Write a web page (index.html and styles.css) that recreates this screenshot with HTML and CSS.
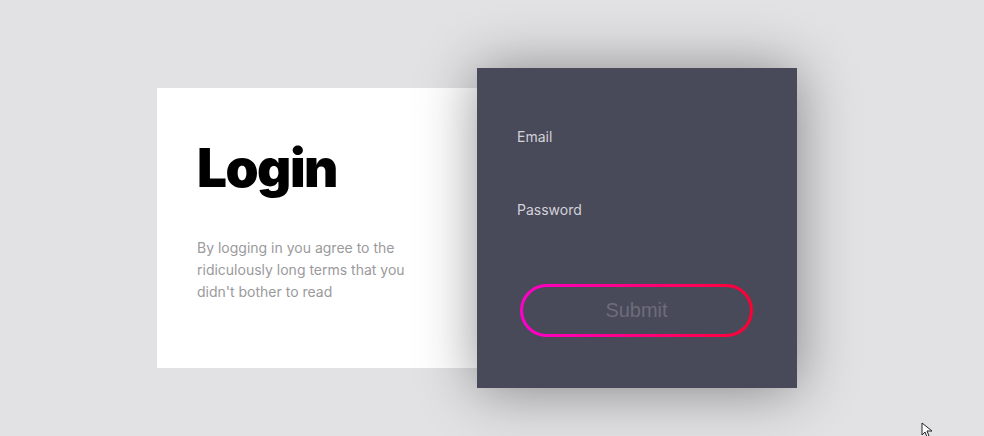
FILE: index.html
```html
<!DOCTYPE html>
<html lang="en">
<head>
<meta charset="utf-8">
<title>Login</title>
<link rel="stylesheet" href="styles.css">
</head>
<body>
<main class="stage">
  <section class="intro">
    <h1 class="title">Login</h1>
    <p class="terms">By logging in you agree to the ridiculously long terms that you didn't bother to read</p>
  </section>
  <form class="form">
    <label class="label" for="email">Email</label>
    <input class="field" id="email" type="email">
    <label class="label" for="password">Password</label>
    <input class="field" id="password" type="password">
    <button class="submit" type="button">Submit</button>
  </form>
</main>
<svg class="cursor" width="14" height="16" viewBox="0 0 14 16"><path d="M1 1 L1 13 L4 10 L6 15 L8 14 L6 9 L11 9 Z" fill="#fff" stroke="#222" stroke-width="1"/></svg>
</body>
</html>
```
FILE: styles.css
```css
html, body {
  margin: 0;
  height: 100%;
}
body {
  background: #e2e2e4;
  font-family: Inter, "Noto Sans", sans-serif;
  overflow: hidden;
  position: relative;
}
.stage {
  display: flex;
  align-items: center;
  padding: 68px 0 0 157px;
}
.intro {
  width: 320px;
  height: 280px;
  box-sizing: border-box;
  background: #fff;
  padding: 48px 40px 0;
}
.title {
  margin: 0;
  font-size: 53px;
  line-height: 64px;
  font-weight: 900;
  color: #000;
  letter-spacing: -1.5px;
}
.terms {
  margin: 37px 0 0;
  max-width: 240px;
  font-size: 14px;
  line-height: 22px;
  color: #9a9a9c;
}
.form {
  width: 320px;
  height: 320px;
  box-sizing: border-box;
  background: #484a59;
  box-shadow: 0 2px 55px rgba(0, 0, 0, 0.42);
  padding: 60px 40px 0;
  display: flex;
  flex-direction: column;
  align-items: flex-start;
  position: relative;
  z-index: 1;
}
.label {
  font-size: 14px;
  line-height: 18px;
  color: #d4d0d8;
}
.field {
  height: 55px;
  width: 100%;
  box-sizing: border-box;
  border: none;
  background: transparent;
  outline: none;
  margin: 0;
  padding: 0;
}
.submit {
  margin: 10px 0 0 3px;
  width: 233px;
  height: 53px;
  box-sizing: border-box;
  border: 3px solid transparent;
  border-radius: 27px;
  background: linear-gradient(#484a59, #484a59) padding-box,
              linear-gradient(to right, #ff00cc, #ff0033) border-box;
  font-family: "Liberation Sans", Arial, sans-serif;
  font-size: 20px;
  color: #6c6c7a;
  padding: 0;
  cursor: pointer;
}
.cursor {
  position: absolute;
  left: 921px;
  top: 422px;
}
```
